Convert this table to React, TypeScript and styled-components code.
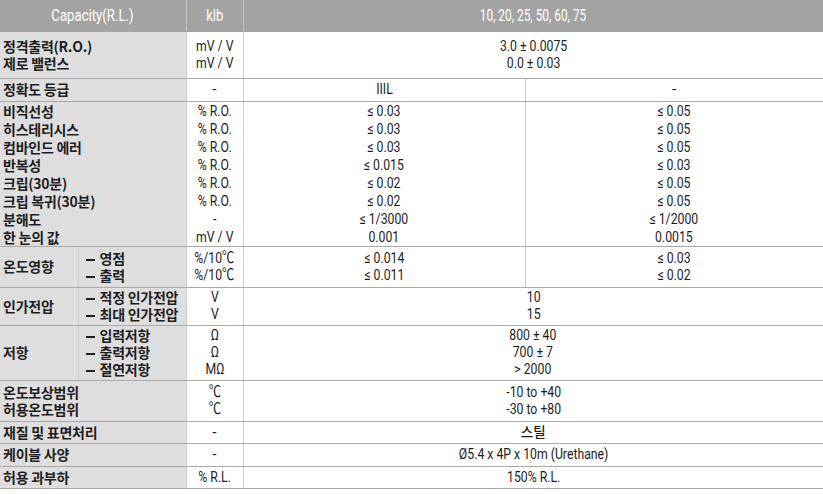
import React from "react";
import styled, { createGlobalStyle } from "styled-components";

const Global = createGlobalStyle`
  html, body { margin: 0; padding: 0; background: #ffffff; }
  body { font-family: Roboto, "Noto Sans CJK KR", sans-serif; }
`;

const NUM = `Roboto, "Liberation Sans", "Noto Sans CJK KR", sans-serif`;
const KR = `"Noto Sans CJK KR", Roboto, sans-serif`;

const Table = styled.table`
  width: 823px;
  border-collapse: collapse;
  table-layout: fixed;
  color: #1c1c1c;
`;

const Col = styled.col<{ $w: number }>`
  width: ${(p) => p.$w}px;
`;

const HeadRow = styled.tr`
  height: 31px;
  background: #a3a3a3;
`;

const Head = styled.th`
  padding: 0;
  font-family: ${NUM};
  font-weight: 400;
  font-size: 16.5px;
  color: #ffffff;
  text-align: center;
  vertical-align: middle;
  white-space: nowrap;
  border-right: 1px solid #c6c6c6;
  border-bottom: 1px solid #a3a3a3;
  &:last-child { border-right: none; }
`;

const Row = styled.tr<{ $h: number }>`
  height: ${(p) => p.$h}px;
`;

const Cell = styled.td<{ $lh?: number }>`
  padding: 0;
  border-bottom: 1px solid #a9a9a9;
  border-right: 1px solid #cdcdcd;
  vertical-align: middle;
  line-height: ${(p) => p.$lh ?? 17}px;
  &:last-child { border-right: none; }
`;

const Label = styled(Cell)`
  background: #dedede;
  font-family: ${KR};
  font-weight: 700;
  font-size: 14px;
  letter-spacing: -0.25px;
  color: #1e1e1e;
  text-align: left;
  padding-left: 3px;
  white-space: nowrap;
`;

const SubLabel = styled(Label)`
  padding-left: 7px;
`;

const Dash = styled.span`
  display: inline-block;
  width: 9px;
  height: 2px;
  background: #1e1e1e;
  vertical-align: middle;
  margin-right: 5px;
`;

const Unit = styled(Cell)`
  font-family: ${NUM};
  font-size: 15.5px;
  text-align: center;
  white-space: nowrap;
`;

const Value = styled(Cell)`
  font-family: ${NUM};
  font-size: 15.5px;
  text-align: center;
  white-space: nowrap;
`;

const Narrow = styled.span<{ $sx?: number }>`
  display: inline-block;
  transform: scaleX(${(p) => p.$sx ?? 0.79});
  transform-origin: center;
`;

const Kr = styled.span`
  font-family: ${KR};
  font-size: 13.5px;
  font-weight: 500;
`;

const Lines = ({ items, sx }: { items: React.ReactNode[]; sx?: number }) => (
  <Narrow $sx={sx}>
    {items.map((t, i) => (
      <React.Fragment key={i}>
        {i > 0 && <br />}
        {t}
      </React.Fragment>
    ))}
  </Narrow>
);

const Plain = ({ items }: { items: React.ReactNode[] }) => (
  <>
    {items.map((t, i) => (
      <React.Fragment key={i}>
        {i > 0 && <br />}
        {t}
      </React.Fragment>
    ))}
  </>
);

const Subs = ({ items }: { items: string[] }) => (
  <>
    {items.map((t, i) => (
      <React.Fragment key={i}>
        {i > 0 && <br />}
        <Dash />
        {t}
      </React.Fragment>
    ))}
  </>
);

export default function App() {
  return (
    <>
      <Global />
      <Table>
        <colgroup>
          <Col $w={78} />
          <Col $w={108} />
          <Col $w={57} />
          <Col $w={282} />
          <Col $w={298} />
        </colgroup>
        <thead>
          <HeadRow>
            <Head colSpan={2}>
              <Narrow $sx={0.8}>Capacity(R.L.)</Narrow>
            </Head>
            <Head>
              <Narrow $sx={0.8}>klb</Narrow>
            </Head>
            <Head colSpan={2}>
              <Narrow $sx={0.72}>10, 20, 25, 50, 60, 75</Narrow>
            </Head>
          </HeadRow>
        </thead>
        <tbody>
          <Row $h={47}>
            <Label colSpan={2}>
              <Plain items={["정격출력(R.O.)", "제로 밸런스"]} />
            </Label>
            <Unit>
              <Lines items={["mV / V", "mV / V"]} />
            </Unit>
            <Value colSpan={2}>
              <Lines items={["3.0 ± 0.0075", "0.0 ± 0.03"]} />
            </Value>
          </Row>
          <Row $h={23}>
            <Label colSpan={2}>정확도 등급</Label>
            <Unit>-</Unit>
            <Value>
              <Lines items={["IIIL"]} />
            </Value>
            <Value>-</Value>
          </Row>
          <Row $h={145}>
            <Label colSpan={2} $lh={18}>
              <Plain
                items={[
                  "비직선성",
                  "히스테리시스",
                  "컴바인드 에러",
                  "반복성",
                  "크립(30분)",
                  "크립 복귀(30분)",
                  "분해도",
                  "한 눈의 값",
                ]}
              />
            </Label>
            <Unit $lh={18}>
              <Lines
                items={["% R.O.", "% R.O.", "% R.O.", "% R.O.", "% R.O.", "% R.O.", "-", "mV / V"]}
              />
            </Unit>
            <Value $lh={18}>
              <Lines
                items={["≤ 0.03", "≤ 0.03", "≤ 0.03", "≤ 0.015", "≤ 0.02", "≤ 0.02", "≤ 1/3000", "0.001"]}
              />
            </Value>
            <Value $lh={18}>
              <Lines
                items={["≤ 0.05", "≤ 0.05", "≤ 0.05", "≤ 0.03", "≤ 0.05", "≤ 0.05", "≤ 1/2000", "0.0015"]}
              />
            </Value>
          </Row>
          <Row $h={41}>
            <Label>온도영향</Label>
            <SubLabel>
              <Subs items={["영점", "출력"]} />
            </SubLabel>
            <Unit>
              <Lines items={["%/10℃", "%/10℃"]} />
            </Unit>
            <Value>
              <Lines items={["≤ 0.014", "≤ 0.011"]} />
            </Value>
            <Value>
              <Lines items={["≤ 0.03", "≤ 0.02"]} />
            </Value>
          </Row>
          <Row $h={38}>
            <Label>인가전압</Label>
            <SubLabel>
              <Subs items={["적정 인가전압", "최대 인가전압"]} />
            </SubLabel>
            <Unit>
              <Lines items={["V", "V"]} />
            </Unit>
            <Value colSpan={2}>
              <Lines items={["10", "15"]} />
            </Value>
          </Row>
          <Row $h={55}>
            <Label>저항</Label>
            <SubLabel>
              <Subs items={["입력저항", "출력저항", "절연저항"]} />
            </SubLabel>
            <Unit>
              <Lines items={["Ω", "Ω", "MΩ"]} />
            </Unit>
            <Value colSpan={2}>
              <Lines items={["800 ± 40", "700 ± 7", "> 2000"]} />
            </Value>
          </Row>
          <Row $h={41}>
            <Label colSpan={2}>
              <Plain items={["온도보상범위", "허용온도범위"]} />
            </Label>
            <Unit>
              <Lines items={["℃", "℃"]} />
            </Unit>
            <Value colSpan={2}>
              <Lines items={["-10 to +40", "-30 to +80"]} />
            </Value>
          </Row>
          <Row $h={22}>
            <Label colSpan={2}>재질 및 표면처리</Label>
            <Unit>-</Unit>
            <Value colSpan={2}>
              <Kr>스틸</Kr>
            </Value>
          </Row>
          <Row $h={23}>
            <Label colSpan={2}>케이블 사양</Label>
            <Unit>-</Unit>
            <Value colSpan={2}>
              <Lines items={["Ø5.4 x 4P x 10m (Urethane)"]} />
            </Value>
          </Row>
          <Row $h={22}>
            <Label colSpan={2}>허용 과부하</Label>
            <Unit>
              <Lines items={["% R.L."]} />
            </Unit>
            <Value colSpan={2}>
              <Lines items={["150% R.L."]} />
            </Value>
          </Row>
        </tbody>
      </Table>
    </>
  );
}
